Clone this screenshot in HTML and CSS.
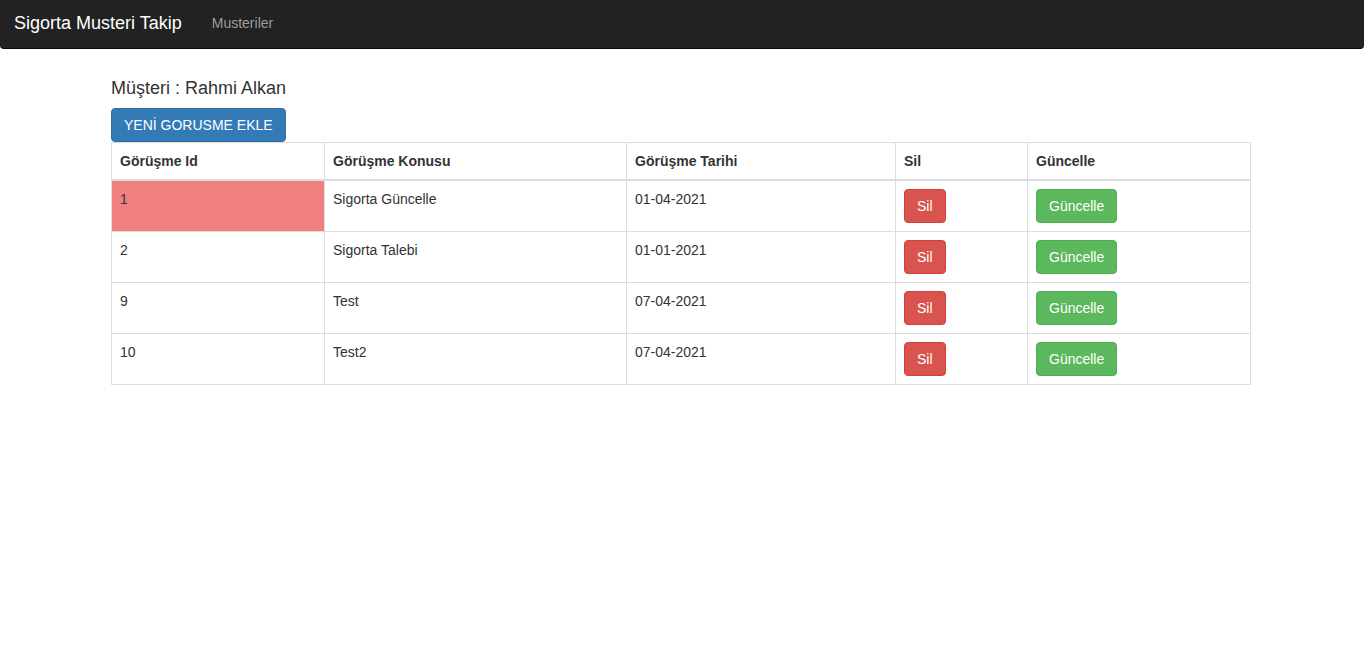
FILE: index.html
```html
<!DOCTYPE html>
<html lang="tr">
<head>
<meta charset="utf-8">
<title>Sigorta Musteri Takip</title>
<link rel="stylesheet" href="styles.css">
</head>
<body>
<nav class="navbar">
  <a class="brand" href="#">Sigorta Musteri Takip</a>
  <a class="nav-link" href="#">Musteriler</a>
</nav>
<main class="container">
  <h4 class="title">Müşteri : Rahmi Alkan</h4>
  <button class="btn btn-primary">YENİ GORUSME EKLE</button>
  <table class="table">
    <thead>
      <tr>
        <th class="c1">Görüşme Id</th>
        <th class="c2">Görüşme Konusu</th>
        <th class="c3">Görüşme Tarihi</th>
        <th class="c4">Sil</th>
        <th class="c5">Güncelle</th>
      </tr>
    </thead>
    <tbody>
      <tr>
        <td class="highlight">1</td>
        <td>Sigorta Güncelle</td>
        <td>01-04-2021</td>
        <td><button class="btn btn-danger">Sil</button></td>
        <td><button class="btn btn-success">Güncelle</button></td>
      </tr>
      <tr>
        <td>2</td>
        <td>Sigorta Talebi</td>
        <td>01-01-2021</td>
        <td><button class="btn btn-danger">Sil</button></td>
        <td><button class="btn btn-success">Güncelle</button></td>
      </tr>
      <tr>
        <td>9</td>
        <td>Test</td>
        <td>07-04-2021</td>
        <td><button class="btn btn-danger">Sil</button></td>
        <td><button class="btn btn-success">Güncelle</button></td>
      </tr>
      <tr>
        <td>10</td>
        <td>Test2</td>
        <td>07-04-2021</td>
        <td><button class="btn btn-danger">Sil</button></td>
        <td><button class="btn btn-success">Güncelle</button></td>
      </tr>
    </tbody>
  </table>
</main>
</body>
</html>
```
FILE: styles.css
```css
* { box-sizing: border-box; }
html, body { margin: 0; padding: 0; background: #fff; }
body {
  font-family: "Liberation Sans", Arial, sans-serif;
  font-size: 14px;
  line-height: 1.42857143;
  color: #333;
}
.navbar {
  display: flex;
  align-items: center;
  height: 49px;
  background: #222;
  border-bottom: 1px solid #080808;
  border-radius: 0 0 4px 4px;
  margin-bottom: 20px;
  padding: 0 0 2px 0;
}
.brand {
  color: #fff;
  font-size: 18px;
  line-height: 20px;
  padding: 0 15px 0 14px;
  text-decoration: none;
}
.nav-link {
  color: #9d9d9d;
  font-size: 14px;
  line-height: 20px;
  padding: 0 15px;
  text-decoration: none;
}
.container {
  display: flow-root;
  width: 1170px;
  margin: 0 auto;
  padding: 0 16px 0 14px;
}
.title {
  font-size: 18px;
  font-weight: 500;
  line-height: 1.1;
  margin: 10px 0 9px;
  color: #333;
}
.btn {
  display: inline-block;
  font-family: inherit;
  font-size: 14px;
  line-height: 20px;
  padding: 6px 12px;
  border: 1px solid transparent;
  border-radius: 4px;
  color: #fff;
  cursor: pointer;
  vertical-align: middle;
}
.btn-primary { background: #337ab7; border-color: #2e6da4; }
.btn-danger { background: #d9534f; border-color: #d43f3a; }
.btn-success { background: #5cb85c; border-color: #4cae4c; }
.table {
  width: 1140px;
  border-collapse: collapse;
  border-spacing: 0;
  table-layout: fixed;
  border: 1px solid #ddd;
}
.table th, .table td {
  border: 1px solid #ddd;
  padding: 8px;
  line-height: 20px;
  text-align: left;
  vertical-align: top;
}
.table th {
  font-weight: bold;
  border-bottom: 2px solid #ddd;
}
.c1 { width: 213px; }
.c2 { width: 302px; }
.c3 { width: 269px; }
.c4 { width: 132px; }
.highlight { background: #f08080; }
```
